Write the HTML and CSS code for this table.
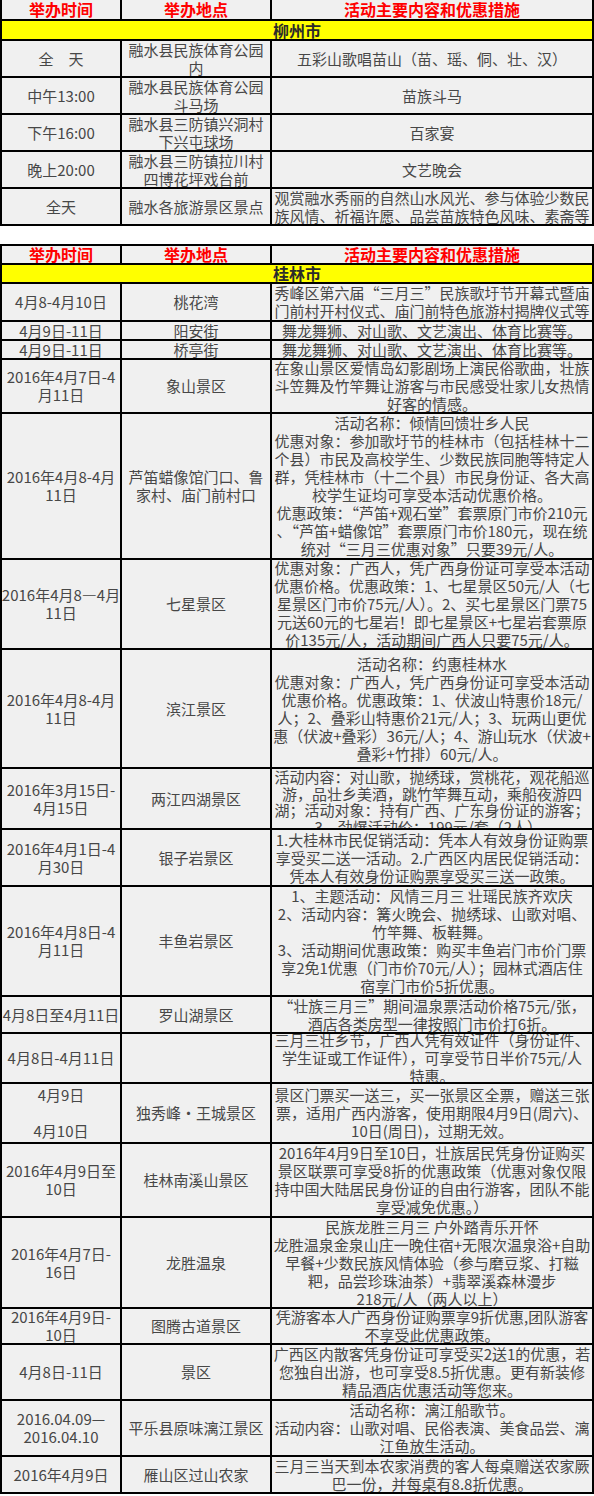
FILE: index.html
```html
<!DOCTYPE html>
<html lang="zh-CN">
<head>
<meta charset="utf-8">
<title>三月三活动</title>
<link rel="stylesheet" href="styles.css">
</head>
<body>
<div class="sheet first">
  <div class="row hd h19"><div class="c c1">举办时间</div><div class="c c2">举办地点</div><div class="c c3">活动主要内容和优惠措施</div></div>
  <div class="row h18"><div class="c city">柳州市</div></div>
  <div class="row h35"><div class="c c1">全　天</div><div class="c c2">融水县民族体育公园<br>内</div><div class="c c3">五彩山歌唱苗山（苗、瑶、侗、壮、汉）</div></div>
  <div class="row h35"><div class="c c1">中午13:00</div><div class="c c2">融水县民族体育公园<br>斗马场</div><div class="c c3">苗族斗马</div></div>
  <div class="row h35"><div class="c c1">下午16:00</div><div class="c c2">融水县三防镇兴洞村<br>下兴屯球场</div><div class="c c3">百家宴</div></div>
  <div class="row h35"><div class="c c1">晚上20:00</div><div class="c c2">融水县三防镇拉川村<br>四博花坪戏台前</div><div class="c c3">文艺晚会</div></div>
  <div class="row h35"><div class="c c1">全天</div><div class="c c2">融水各旅游景区景点</div><div class="c c3">观赏融水秀丽的自然山水风光、参与体验少数民<br>族风情、祈福许愿、品尝苗族特色风味、素斋等</div></div>
</div>

<div class="sheet second">
  <div class="row hd h17"><div class="c c1">举办时间</div><div class="c c2">举办地点</div><div class="c c3">活动主要内容和优惠措施</div></div>
  <div class="row h17"><div class="c city">桂林市</div></div>
  <div class="row h36"><div class="c c1">4月8-4月10日</div><div class="c c2">桃花湾</div><div class="c c3">秀峰区第六届“三月三”民族歌圩节开幕式暨庙<br>门前村开村仪式、庙门前特色旅游村揭牌仪式等</div></div>
  <div class="row h17"><div class="c c1">4月9日-11日</div><div class="c c2">阳安街</div><div class="c c3">舞龙舞狮、对山歌、文艺演出、体育比赛等。</div></div>
  <div class="row h17"><div class="c c1">4月9日-11日</div><div class="c c2">桥亭街</div><div class="c c3">舞龙舞狮、对山歌、文艺演出、体育比赛等。</div></div>
  <div class="row h52"><div class="c c1">2016年4月7日-4<br>月11日</div><div class="c c2">象山景区</div><div class="c c3">在象山景区爱情岛幻影剧场上演民俗歌曲，壮族<br>斗笠舞及竹竿舞让游客与市民感受壮家儿女热情<br>好客的情感。</div></div>
  <div class="row h144"><div class="c c1">2016年4月8-4月<br>11日</div><div class="c c2">芦笛蜡像馆门口、鲁<br>家村、庙门前村口</div><div class="c c3">活动名称：倾情回馈壮乡人民<br>优惠对象：参加歌圩节的桂林市（包括桂林十二<br>个县）市民及高校学生、少数民族同胞等特定人<br>群，凭桂林市（十二个县）市民身份证、各大高<br>校学生证均可享受本活动优惠价格。<br>优惠政策：“芦笛+观石堂”套票原门市价210元<br>、“芦笛+蜡像馆”套票原门市价180元，现在统<br>统对“三月三优惠对象”只要39元/人。</div></div>
  <div class="row h88"><div class="c c1">2016年4月8—4月<br>11日</div><div class="c c2">七星景区</div><div class="c c3">优惠对象：广西人，凭广西身份证可享受本活动<br>优惠价格。优惠政策：1、七星景区50元/人（七<br>星景区门市价75元/人）。2、买七星景区门票75<br>元送60元的七星岩！即七星景区+七星岩套票原<br>价135元/人，活动期间广西人只要75元/人。</div></div>
  <div class="row h117"><div class="c c1">2016年4月8-4月<br>11日</div><div class="c c2">滨江景区</div><div class="c c3">活动名称：约惠桂林水<br>优惠对象：广西人，凭广西身份证可享受本活动<br>优惠价格。优惠政策：1、伏波山特惠价18元/<br>人；2、叠彩山特惠价21元/人；3、玩两山更优<br>惠（伏波+叠彩）36元/人；4、游山玩水（伏波+<br>叠彩+竹排）60元/人。</div></div>
  <div class="row h59"><div class="c c1">2016年3月15日-<br>4月15日</div><div class="c c2">两江四湖景区</div><div class="c c3 tight">活动内容：对山歌，抛绣球，赏桃花，观花船巡<br>游，品壮乡美酒，跳竹竿舞互动，乘船夜游四<br>湖；活动对象：持有广西、广东身份证的游客；<br>3、劲爆活动价：199元/套（2人）。</div></div>
  <div class="row h55"><div class="c c1">2016年4月1日-4<br>月30日</div><div class="c c2">银子岩景区</div><div class="c c3">1.大桂林市民促销活动：凭本人有效身份证购票<br>享受买二送一活动。2.广西区内居民促销活动：<br>凭本人有效身份证购票享受买三送一政策。</div></div>
  <div class="row h108"><div class="c c1">2016年4月8日-4<br>月11日</div><div class="c c2">丰鱼岩景区</div><div class="c c3">1、主题活动：风情三月三 壮瑶民族齐欢庆<br>2、活动内容：篝火晚会、抛绣球、山歌对唱、<br>竹竿舞、板鞋舞。<br>3、活动期间优惠政策：购买丰鱼岩门市价门票<br>享2免1优惠（门市价70元/人）；园林式酒店住<br>宿享门市价5折优惠。</div></div>
  <div class="row h35"><div class="c c1">4月8日至4月11日</div><div class="c c2">罗山湖景区</div><div class="c c3">“壮族三月三”期间温泉票活动价格75元/张，<br>酒店各类房型一律按照门市价打6折。</div></div>
  <div class="row h48"><div class="c c1">4月8日-4月11日</div><div class="c c2"></div><div class="c c3">三月三壮乡节，广西人凭有效证件（身份证件、<br>学生证或工作证件），可享受节日半价75元/人<br>特惠。</div></div>
  <div class="row h58"><div class="c c1">4月9日<br><br>4月10日</div><div class="c c2">独秀峰·王城景区</div><div class="c c3">景区门票买一送三，买一张景区全票，赠送三张<br>票，适用广西内游客，使用期限4月9日(周六)、<br>10日(周日)，过期无效。</div></div>
  <div class="row h72"><div class="c c1">2016年4月9日至<br>10日</div><div class="c c2">桂林南溪山景区</div><div class="c c3">2016年4月9日至10日，壮族居民凭身份证购买<br>景区联票可享受8折的优惠政策（优惠对象仅限<br>持中国大陆居民身份证的自由行游客，团队不能<br>享受减免优惠。）</div></div>
  <div class="row h89"><div class="c c1">2016年4月7日-<br>16日</div><div class="c c2">龙胜温泉</div><div class="c c3">民族龙胜三月三 户外踏青乐开怀<br>龙胜温泉金泉山庄一晚住宿+无限次温泉浴+自助<br>早餐+少数民族风情体验（参与磨豆浆、打糍<br>粑，品尝珍珠油茶）+翡翠溪森林漫步<br>218元/人（两人以上）</div></div>
  <div class="row h34"><div class="c c1">2016年4月9日-<br>10日</div><div class="c c2">图腾古道景区</div><div class="c c3">凭游客本人广西身份证购票享9折优惠,团队游客<br>不享受此优惠政策。</div></div>
  <div class="row h54"><div class="c c1">4月8日-11日</div><div class="c c2">景区</div><div class="c c3">广西区内散客凭身份证可享受买2送1的优惠，若<br>您独自出游，也可享受8.5折优惠。更有新装修<br>精品酒店优惠活动等您来。</div></div>
  <div class="row h54"><div class="c c1">2016.04.09—<br>2016.04.10</div><div class="c c2">平乐县原味漓江景区</div><div class="c c3">活动名称：漓江船歌节。<br>活动内容：山歌对唱、民俗表演、美食品尝、漓<br>江鱼放生活动。</div></div>
  <div class="row h35"><div class="c c1">2016年4月9日</div><div class="c c2">雁山区过山农家</div><div class="c c3">三月三当天到本农家消费的客人每桌赠送农家厥<br>巴一份，并每桌有8.8折优惠。</div></div>
</div>
</body>
</html>
```

FILE: styles.css
```css
html, body {
  margin: 0;
  padding: 0;
  background: #ffffff;
}

body {
  width: 594px;
  font-family: "Noto Sans CJK SC", "Noto Sans", sans-serif;
  font-size: 15px;
  line-height: 18px;
  color: #474747;
}

.sheet {
  display: flex;
  flex-direction: column;
  gap: 2px;
  background: #000000;
  border: 2px solid #000000;
  width: 590px;
}

.sheet.first {
  border-top-width: 0;
}

.sheet.second {
  margin-top: 18px;
}

.row {
  display: flex;
  gap: 2px;
  overflow: hidden;
}

.c {
  background: #f0f0f0;
  display: flex;
  flex-direction: column;
  justify-content: center;
  align-items: center;
  text-align: center;
  white-space: nowrap;
  overflow: hidden;
}

.c1 { width: 118px; flex: none; }
.c2 { width: 148px; flex: none; }
.c3 { width: 320px; flex: none; }

.c.tight {
  line-height: 16.5px;
  justify-content: safe center;
}

.hd .c {
  color: #ff0000;
  font-weight: bold;
  font-size: 16px;
  line-height: 17px;
}

.city {
  flex: 1;
  background: #ffff00;
  color: #2b2b2b;
  font-weight: bold;
  font-size: 16px;
  line-height: 17px;
}

.h17 { height: 17px; }
.h18 { height: 18px; }
.h19 { height: 19px; }
.h34 { height: 34px; }
.h35 { height: 35px; }
.h36 { height: 36px; }
.h48 { height: 48px; }
.h52 { height: 52px; }
.h54 { height: 54px; }
.h55 { height: 55px; }
.h58 { height: 58px; }
.h59 { height: 59px; }
.h72 { height: 72px; }
.h88 { height: 88px; }
.h89 { height: 89px; }
.h108 { height: 108px; }
.h117 { height: 117px; }
.h144 { height: 144px; }
```
